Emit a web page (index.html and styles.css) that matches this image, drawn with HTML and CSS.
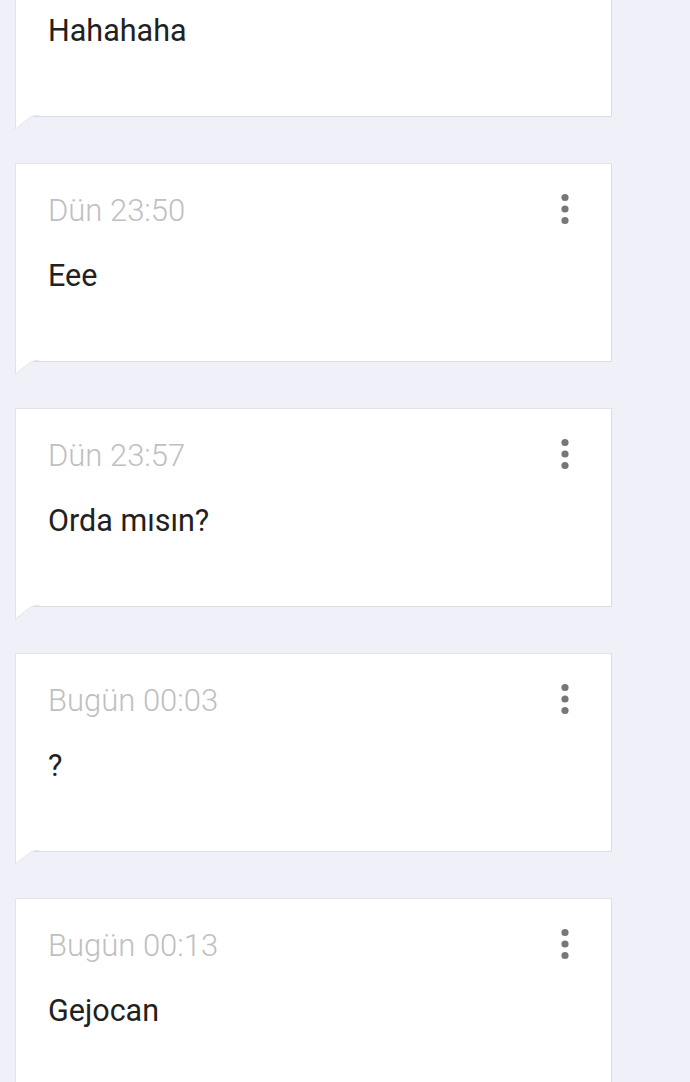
FILE: index.html
```html
<!DOCTYPE html>
<html lang="tr">
<head>
<meta charset="utf-8">
<title>Notlar</title>
<link rel="stylesheet" href="styles.css">
</head>
<body>
<div class="list">
  <div class="card">
    <div class="head"><span class="time"></span><svg class="dots" width="10" height="32" viewBox="0 0 10 32"><circle cx="5" cy="4.5" r="3.6"/><circle cx="5" cy="16" r="3.6"/><circle cx="5" cy="27.5" r="3.6"/></svg></div>
    <div class="msg">Hahahaha</div>
    <svg class="tail" width="24" height="16" viewBox="0 0 24 16"><path d="M1 0 L1 14 L16 2.5 Q19 0 24 0 Z" fill="#fff"/><path d="M0.5 0 L0.5 14 L15.8 2 Q18.6 0.5 24 0.5" fill="none" stroke="#e1e1e9" stroke-width="1"/></svg>
  </div>
  <div class="card">
    <div class="head"><span class="time">Dün 23:50</span><svg class="dots" width="10" height="32" viewBox="0 0 10 32"><circle cx="5" cy="4.5" r="3.6"/><circle cx="5" cy="16" r="3.6"/><circle cx="5" cy="27.5" r="3.6"/></svg></div>
    <div class="msg">Eee</div>
    <svg class="tail" width="24" height="16" viewBox="0 0 24 16"><path d="M1 0 L1 14 L16 2.5 Q19 0 24 0 Z" fill="#fff"/><path d="M0.5 0 L0.5 14 L15.8 2 Q18.6 0.5 24 0.5" fill="none" stroke="#e1e1e9" stroke-width="1"/></svg>
  </div>
  <div class="card">
    <div class="head"><span class="time">Dün 23:57</span><svg class="dots" width="10" height="32" viewBox="0 0 10 32"><circle cx="5" cy="4.5" r="3.6"/><circle cx="5" cy="16" r="3.6"/><circle cx="5" cy="27.5" r="3.6"/></svg></div>
    <div class="msg">Orda mısın?</div>
    <svg class="tail" width="24" height="16" viewBox="0 0 24 16"><path d="M1 0 L1 14 L16 2.5 Q19 0 24 0 Z" fill="#fff"/><path d="M0.5 0 L0.5 14 L15.8 2 Q18.6 0.5 24 0.5" fill="none" stroke="#e1e1e9" stroke-width="1"/></svg>
  </div>
  <div class="card">
    <div class="head"><span class="time">Bugün 00:03</span><svg class="dots" width="10" height="32" viewBox="0 0 10 32"><circle cx="5" cy="4.5" r="3.6"/><circle cx="5" cy="16" r="3.6"/><circle cx="5" cy="27.5" r="3.6"/></svg></div>
    <div class="msg">?</div>
    <svg class="tail" width="24" height="16" viewBox="0 0 24 16"><path d="M1 0 L1 14 L16 2.5 Q19 0 24 0 Z" fill="#fff"/><path d="M0.5 0 L0.5 14 L15.8 2 Q18.6 0.5 24 0.5" fill="none" stroke="#e1e1e9" stroke-width="1"/></svg>
  </div>
  <div class="card">
    <div class="head"><span class="time">Bugün 00:13</span><svg class="dots" width="10" height="32" viewBox="0 0 10 32"><circle cx="5" cy="4.5" r="3.6"/><circle cx="5" cy="16" r="3.6"/><circle cx="5" cy="27.5" r="3.6"/></svg></div>
    <div class="msg">Gejocan</div>
    <svg class="tail" width="24" height="16" viewBox="0 0 24 16"><path d="M1 0 L1 14 L16 2.5 Q19 0 24 0 Z" fill="#fff"/><path d="M0.5 0 L0.5 14 L15.8 2 Q18.6 0.5 24 0.5" fill="none" stroke="#e1e1e9" stroke-width="1"/></svg>
  </div>
</div>
</body>
</html>
```

FILE: styles.css
```css
html, body {
  margin: 0;
  padding: 0;
  background: #f0f0f9;
  font-family: Roboto, "Liberation Sans", sans-serif;
  overflow: hidden;
}

.list {
  display: flex;
  flex-direction: column;
  gap: 46px;
  margin-top: -83px;
  padding-left: 15px;
  width: 597px;
}

.card {
  position: relative;
  box-sizing: border-box;
  height: 199px;
  background: #fff;
  border: 1px solid #e3e3eb;
  border-right-color: #dcdce4;
  border-bottom-color: #dcdce4;
  padding: 29px 41px 0 32px;
}

.head {
  display: flex;
  justify-content: space-between;
  align-items: center;
  height: 36px;
}

.time {
  font-size: 31px;
  line-height: 36px;
  font-weight: 300;
  color: #bfbfbf;
}

.dots {
  fill: #777;
  margin-top: -4px;
}

.msg {
  margin-top: 29px;
  font-size: 30.5px;
  line-height: 36px;
  color: #212121;
}

.list > .card:first-child {
  margin-top: 1px;
}

.tail {
  position: absolute;
  left: -1px;
  bottom: -15px;
}
```
